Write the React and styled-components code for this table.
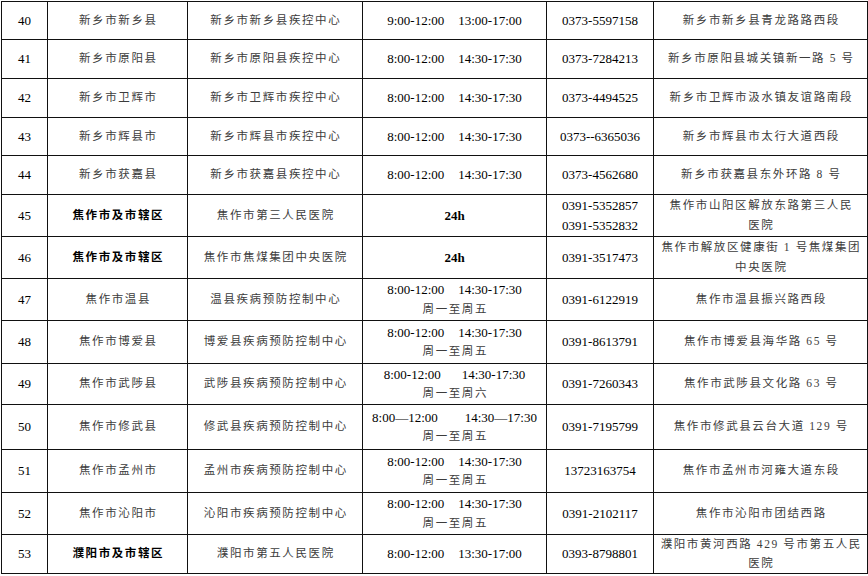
import React from "react";
import styled, { createGlobalStyle } from "styled-components";

const Global = createGlobalStyle`
  html, body { margin: 0; padding: 0; background: #fff; }
  body { font-family: "Liberation Serif", "Noto Sans CJK SC", serif; }
`;

const Table = styled.div`
  margin: 1px 0 0 1px;
  width: 867px;
  box-sizing: border-box;
  background: #111;
  padding: 1px;
  display: flex;
  flex-direction: column;
  gap: 1px;
`;

const Row = styled.div`
  display: grid;
  grid-template-columns: 45px 139px 174px 183px 106px 213px;
  gap: 1px;
  height: ${(p) => p.$h}px;
`;

const Cell = styled.div`
  background: #fff;
  display: flex;
  flex-direction: column;
  align-items: center;
  justify-content: center;
  text-align: center;
  overflow: hidden;
`;

const Num = styled.span`
  font-family: "Liberation Serif", serif;
  font-size: 13px;
  color: #000;
  line-height: 19.5px;
  font-weight: ${(p) => (p.$bold ? 700 : 400)};
  white-space: nowrap;
`;

const Han = styled.span`
  font-family: "Liberation Serif", "Noto Sans CJK SC", serif;
  font-size: 11.5px;
  letter-spacing: 1.6px;
  padding-left: 1.6px;
  line-height: 19.5px;
  white-space: nowrap;
  color: ${(p) => (p.$bold ? "#000" : "#3c3c3c")};
  font-weight: ${(p) => (p.$bold ? 700 : 400)};
`;

const HoursLine = styled.div`
  display: flex;
  gap: ${(p) => p.$gap}px;
  justify-content: center;
`;

const std = { a: "8:00-12:00", b: "14:30-17:30", gap: 14 };

const rows = [
  { n: 40, region: "新乡市新乡县", org: "新乡市新乡县疾控中心", hours: { a: "9:00-12:00", b: "13:00-17:00", gap: 14 }, phone: ["0373-5597158"], addr: ["新乡市新乡县青龙路路西段"], h: 37 },
  { n: 41, region: "新乡市原阳县", org: "新乡市原阳县疾控中心", hours: std, phone: ["0373-7284213"], addr: ["新乡市原阳县城关镇新一路 5 号"], h: 38 },
  { n: 42, region: "新乡市卫辉市", org: "新乡市卫辉市疾控中心", hours: std, phone: ["0373-4494525"], addr: ["新乡市卫辉市汲水镇友谊路南段"], h: 38 },
  { n: 43, region: "新乡市辉县市", org: "新乡市辉县市疾控中心", hours: std, phone: ["0373--6365036"], addr: ["新乡市辉县市太行大道西段"], h: 37 },
  { n: 44, region: "新乡市获嘉县", org: "新乡市获嘉县疾控中心", hours: std, phone: ["0373-4562680"], addr: ["新乡市获嘉县东外环路 8 号"], h: 38 },
  { n: 45, region: "焦作市及市辖区", bold: true, org: "焦作市第三人民医院", allDay: true, phone: ["0391-5352857", "0391-5352832"], addr: ["焦作市山阳区解放东路第三人民", "医院"], h: 41 },
  { n: 46, region: "焦作市及市辖区", bold: true, org: "焦作市焦煤集团中央医院", allDay: true, phone: ["0391-3517473"], addr: ["焦作市解放区健康街 1 号焦煤集团", "中央医院"], h: 41 },
  { n: 47, region: "焦作市温县", org: "温县疾病预防控制中心", hours: std, days: "周一至周五", phone: ["0391-6122919"], addr: ["焦作市温县振兴路西段"], h: 41 },
  { n: 48, region: "焦作市博爱县", org: "博爱县疾病预防控制中心", hours: std, days: "周一至周五", phone: ["0391-8613791"], addr: ["焦作市博爱县海华路 65 号"], h: 42 },
  { n: 49, region: "焦作市武陟县", org: "武陟县疾病预防控制中心", hours: { a: "8:00-12:00", b: "14:30-17:30", gap: 21 }, days: "周一至周六", phone: ["0391-7260343"], addr: ["焦作市武陟县文化路 63 号"], h: 40 },
  { n: 50, region: "焦作市修武县", org: "修武县疾病预防控制中心", hours: { a: "8:00—12:00", b: "14:30—17:30", gap: 27 }, days: "周一至周五", phone: ["0391-7195799"], addr: ["焦作市修武县云台大道 129 号"], h: 44 },
  { n: 51, region: "焦作市孟州市", org: "孟州市疾病预防控制中心", hours: std, days: "周一至周五", phone: ["13723163754"], addr: ["焦作市孟州市河雍大道东段"], h: 42 },
  { n: 52, region: "焦作市沁阳市", org: "沁阳市疾病预防控制中心", hours: std, days: "周一至周五", phone: ["0391-2102117"], addr: ["焦作市沁阳市团结西路"], h: 41 },
  { n: 53, region: "濮阳市及市辖区", bold: true, org: "濮阳市第五人民医院", hours: { a: "8:00-12:00", b: "13:30-17:00", gap: 14 }, phone: ["0393-8798801"], addr: ["濮阳市黄河西路 429 号市第五人民", "医院"], h: 38 },
];

export default function App() {
  return (
    <>
      <Global />
      <Table>
        {rows.map((r) => (
          <Row key={r.n} $h={r.h}>
            <Cell>
              <Num>{r.n}</Num>
            </Cell>
            <Cell>
              <Han $bold={r.bold}>{r.region}</Han>
            </Cell>
            <Cell>
              <Han>{r.org}</Han>
            </Cell>
            <Cell>
              {r.allDay ? (
                <Num $bold>24h</Num>
              ) : (
                <>
                  <HoursLine $gap={r.hours.gap}>
                    <Num>{r.hours.a}</Num>
                    <Num>{r.hours.b}</Num>
                  </HoursLine>
                  {r.days && <Han>{r.days}</Han>}
                </>
              )}
            </Cell>
            <Cell>
              {r.phone.map((p) => (
                <Num key={p}>{p}</Num>
              ))}
            </Cell>
            <Cell>
              {r.addr.map((a) => (
                <Han key={a}>{a}</Han>
              ))}
            </Cell>
          </Row>
        ))}
      </Table>
    </>
  );
}
